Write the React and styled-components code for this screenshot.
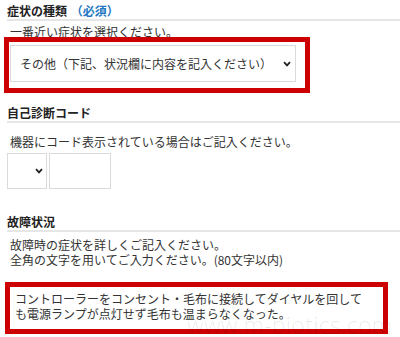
import React from "react";
import styled, { createGlobalStyle } from "styled-components";

const Global = createGlobalStyle`
  html, body { margin: 0; padding: 0; background: #fff; }
  body { overflow: hidden; }
`;

const Page = styled.div`
  position: relative;
  width: 400px;
  height: 337px;
  box-sizing: border-box;
  padding: 4px 0 0 7px;
  overflow: hidden;
  font-family: "Noto Sans CJK JP", "Noto Sans", sans-serif;
  font-size: 12px;
  color: #333;
`;

const SectionTitle = styled.h2`
  margin: ${(p) => p.$top || 0}px 0 0;
  padding: 0 0 1px;
  font-size: 12px;
  line-height: 14px;
  font-weight: bold;
  color: #222;
  border-bottom: 2px solid #e6e6e6;
`;

const Required = styled.span`
  color: #2277c2;
  margin-left: 1px;
`;

const Note = styled.p`
  margin: ${(p) => p.$top || 0}px 0 0;
  padding-left: 3px;
  line-height: 15px;
  color: #333;
`;

const Annotated = styled.div`
  position: relative;
  margin: ${(p) => p.$top || 0}px 0 0 ${(p) => p.$left || 0}px;
  width: ${(p) => p.$width}px;
`;

const RedMark = styled.span`
  position: absolute;
  top: ${(p) => p.$t}px;
  left: ${(p) => p.$l}px;
  right: ${(p) => p.$r}px;
  bottom: ${(p) => p.$b}px;
  border: 5px solid #cc0000;
  pointer-events: none;
  z-index: 2;
`;

const SelectBox = styled.div`
  box-sizing: border-box;
  display: flex;
  align-items: center;
  justify-content: ${(p) => (p.$empty ? "flex-end" : "space-between")};
  width: ${(p) => p.$width}px;
  height: ${(p) => p.$height}px;
  padding: 0 ${(p) => p.$padR}px 0 9px;
  border: 1px solid #dadada;
  background: #fff;
  color: #333;
  font-size: 12px;
`;

const CodeRow = styled.div`
  display: flex;
  gap: 2px;
  margin-top: 4px;
`;

const CodeInput = styled.div`
  box-sizing: border-box;
  width: 62px;
  height: 36px;
  border: 1px solid #dadada;
  background: #fff;
`;

const TextBox = styled.div`
  box-sizing: border-box;
  width: 375px;
  height: 44px;
  padding: 4px 5px;
  border: 1px solid #dadada;
  line-height: 15px;
  color: #333;
  background: #fff;
`;

const Watermark = styled.span`
  position: absolute;
  left: 187px;
  top: 309px;
  font-family: "Open Sans", "Liberation Sans", sans-serif;
  font-weight: 300;
  font-size: 23px;
  letter-spacing: 0.3px;
  color: rgba(0, 0, 0, 0.09);
  white-space: nowrap;
  pointer-events: none;
  z-index: 3;
`;

const Chevron = () => (
  <svg width="8" height="6" viewBox="0 0 8 6" aria-hidden="true">
    <path d="M1 1.2 L4 4.4 L7 1.2" fill="none" stroke="#222" strokeWidth="1.8" />
  </svg>
);

export default function App() {
  return (
    <>
      <Global />
      <Page>
        <SectionTitle>
          症状の種類 <Required>（必須）</Required>
        </SectionTitle>
        <Note $top={3}>一番近い症状を選択ください。</Note>
        <Annotated $top={6} $left={3} $width={286}>
          <SelectBox $width={286} $height={37} $padR={4}>
            <span>その他（下記、状況欄に内容を記入ください）</span>
            <Chevron />
          </SelectBox>
          <RedMark $t={-8} $l={-6} $r={-14} $b={-11} />
        </Annotated>

        <SectionTitle $top={24}>自己診断コード</SectionTitle>
        <Note $top={11}>機器にコード表示されている場合はご記入ください。</Note>
        <CodeRow>
          <SelectBox $empty $width={40} $height={36} $padR={3}>
            <Chevron />
          </SelectBox>
          <CodeInput />
        </CodeRow>

        <SectionTitle $top={26}>故障状況</SectionTitle>
        <Note $top={5}>
          故障時の症状を詳しくご記入ください。
          <br />
          全角の文字を用いてご入力ください。(80文字以内)
        </Note>
        <Annotated $top={19} $left={2} $width={375}>
          <TextBox>
            コントローラーをコンセント・毛布に接続してダイヤルを回して
            <br />
            も電源ランプが点灯せず毛布も温まらなくなった。
          </TextBox>
          <RedMark $t={-4} $l={-4} $r={-4} $b={-4} />
        </Annotated>
        <Watermark>www.m-biotics.com</Watermark>
      </Page>
    </>
  );
}
